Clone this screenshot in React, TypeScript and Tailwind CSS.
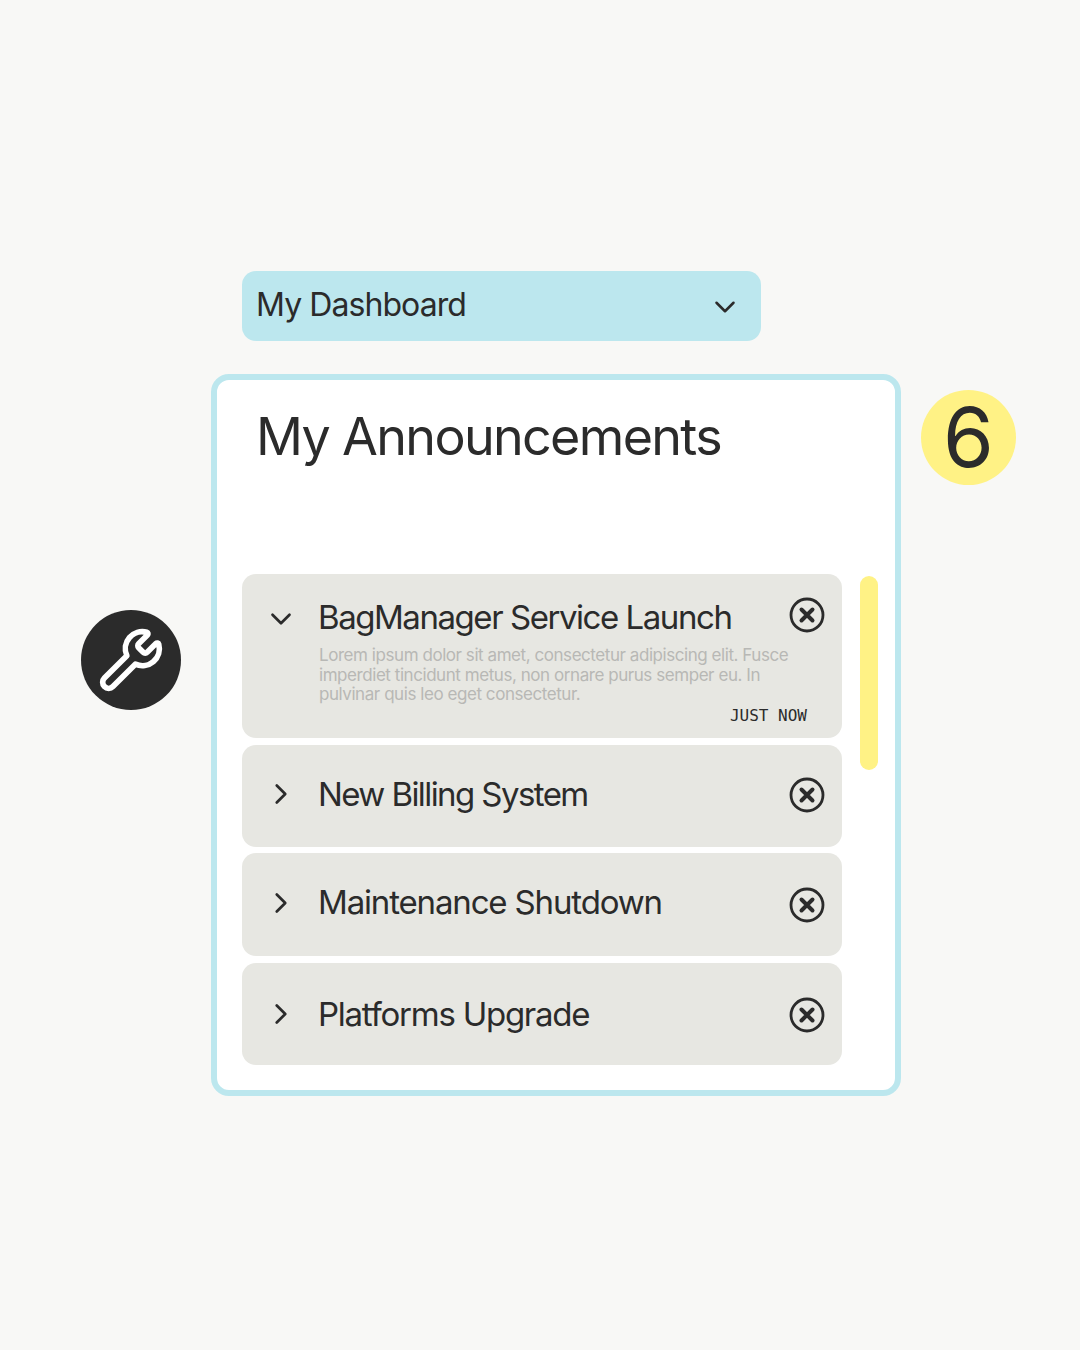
import { ChevronDown, ChevronRight, Wrench } from "lucide-react";

const ITEMS = [
  { title: "New Billing System", h: "h-[102px]", gap: "mt-[7px]", textTop: "mt-[27px]", chevTop: "mt-[32px]", closeTop: "mt-[32px]", tracking: "tracking-[-0.048em]" },
  { title: "Maintenance Shutdown", h: "h-[103px]", gap: "mt-[6px]", textTop: "mt-[27px]", chevTop: "mt-[33px]", closeTop: "mt-[34px]", tracking: "tracking-[-0.035em]" },
  { title: "Platforms Upgrade", h: "h-[102px]", gap: "mt-[7px]", textTop: "mt-[29px]", chevTop: "mt-[34px]", closeTop: "mt-[34px]", tracking: "tracking-[-0.038em]" },
];

function CloseIcon() {
  return (
    <svg width="36" height="36" viewBox="0 0 36 36" fill="none" className="shrink-0 text-[#2b2b2b]">
      <circle cx="18" cy="18" r="16" stroke="currentColor" strokeWidth="2.8" />
      <path d="M12.5 12.5L23.5 23.5M23.5 12.5L12.5 23.5" stroke="currentColor" strokeWidth="4" strokeLinecap="round" />
    </svg>
  );
}

function Row({ title, h, gap, textTop, chevTop, closeTop, tracking }: (typeof ITEMS)[number]) {
  return (
    <div className={`${h} ${gap} flex items-start rounded-[14px] bg-[#e7e7e2] pr-[17px] pl-[22px]`}>
      <ChevronRight size={34} strokeWidth={1.9} className={`${chevTop} shrink-0`} />
      <p className={`${textTop} ${tracking} ml-[20px] flex-1 text-[33px] leading-[44px]`}>{title}</p>
      <div className={closeTop}>
        <CloseIcon />
      </div>
    </div>
  );
}

export default function App() {
  return (
    <div className="h-[1350px] w-[1080px] overflow-hidden bg-[#f8f8f6] pt-[271px] font-['Inter',sans-serif] text-[#2b2b2b]">
      {/* Dropdown */}
      <div className="ml-[242px] flex h-[70px] w-[519px] items-center justify-between rounded-[14px] bg-[#bce7ee] pr-[19px] pl-[14px]">
        <span className="mb-[3px] text-[32px] leading-none tracking-[-0.029em]">My Dashboard</span>
        <ChevronDown size={34} strokeWidth={1.8} className="mt-[2px]" />
      </div>

      <div className="mt-[33px] flex items-start pl-[81px]">
        {/* Wrench */}
        <div className="mt-[236px] flex h-[100px] w-[100px] shrink-0 items-center justify-center rounded-full bg-[#2b2b2b]">
          <Wrench size={68} strokeWidth={2} className="text-white" />
        </div>

        {/* Card */}
        <div className="ml-[30px] h-[722px] w-[690px] shrink-0 rounded-[18px] border-[6px] border-[#bce7ee] bg-white pt-[24px] pl-[25px]">
          <h1 className="ml-[14px] text-[52px] leading-[66px] font-normal tracking-[-0.032em]">My Announcements</h1>
          <div className="mt-[104px] flex items-start">
            <div className="w-[600px] shrink-0">
              {/* Open item */}
              <div className="h-[164px] rounded-[14px] bg-[#e7e7e2] pt-[24px] pr-[17px] pl-[22px]">
                <div className="flex items-start">
                  <ChevronDown size={34} strokeWidth={1.9} className="mt-[4px] shrink-0" />
                  <p className="ml-[20px] flex-1 text-[33px] leading-[38px] tracking-[-0.044em]">BagManager Service Launch</p>
                  <div className="mt-[-1px]">
                    <CloseIcon />
                  </div>
                </div>
                <p className="mt-[10px] ml-[55px] text-[17px] leading-[19.5px] tracking-[-0.026em] text-[#b8b8b5]">
                  Lorem ipsum dolor sit amet, consectetur adipiscing elit. Fusce
                  <br />
                  imperdiet tincidunt metus, non ornare purus semper eu. In
                  <br />
                  pulvinar quis leo eget consectetur.
                </p>
                <p className="mt-[1px] mr-[18px] text-right font-['DejaVu_Sans_Mono',monospace] text-[16px] leading-[20px]">JUST NOW</p>
              </div>
              {ITEMS.map((item) => (
                <Row key={item.title} {...item} />
              ))}
            </div>
            {/* Scrollbar */}
            <div className="mt-[2px] ml-[18px] h-[194px] w-[18px] rounded-full bg-[#fff285]" />
          </div>
        </div>

        {/* Badge */}
        <div className="mt-[16px] ml-[20px] flex h-[95px] w-[95px] shrink-0 items-center justify-center rounded-full bg-[#fff285] text-[82px] leading-none">
          6
        </div>
      </div>
    </div>
  );
}
